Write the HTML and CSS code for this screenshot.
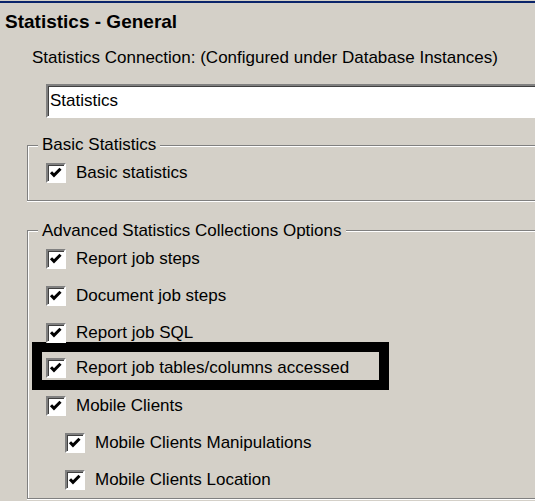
FILE: index.html
```html
<!DOCTYPE html>
<html>
<head>
<meta charset="utf-8">
<link rel="stylesheet" href="styles.css">
</head>
<body>
<div class="topline"></div>
<div class="title">Statistics - General</div>
<div class="conn-label">Statistics Connection: (Configured under Database Instances)</div>
<div class="input">Statistics</div>

<fieldset class="group group-basic">
  <legend>Basic Statistics</legend>
  <div class="row"><span class="cb"><svg viewBox="0 0 16 16" width="16" height="16"><polyline points="3,7.2 6,10.4 12.5,3.8" fill="none" stroke="#000" stroke-width="3"/></svg></span><span class="lbl">Basic statistics</span></div>
</fieldset>

<fieldset class="group group-adv">
  <legend>Advanced Statistics Collections Options</legend>
  <div class="row"><span class="cb"><svg viewBox="0 0 16 16" width="16" height="16"><polyline points="3,7.2 6,10.4 12.5,3.8" fill="none" stroke="#000" stroke-width="3"/></svg></span><span class="lbl">Report job steps</span></div>
  <div class="row"><span class="cb"><svg viewBox="0 0 16 16" width="16" height="16"><polyline points="3,7.2 6,10.4 12.5,3.8" fill="none" stroke="#000" stroke-width="3"/></svg></span><span class="lbl">Document job steps</span></div>
  <div class="row"><span class="cb"><svg viewBox="0 0 16 16" width="16" height="16"><polyline points="3,7.2 6,10.4 12.5,3.8" fill="none" stroke="#000" stroke-width="3"/></svg></span><span class="lbl">Report job SQL</span></div>
  <div class="row highlight"><span class="cb"><svg viewBox="0 0 16 16" width="16" height="16"><polyline points="3,7.2 6,10.4 12.5,3.8" fill="none" stroke="#000" stroke-width="3"/></svg></span><span class="lbl">Report job tables/columns accessed</span></div>
  <div class="row"><span class="cb"><svg viewBox="0 0 16 16" width="16" height="16"><polyline points="3,7.2 6,10.4 12.5,3.8" fill="none" stroke="#000" stroke-width="3"/></svg></span><span class="lbl">Mobile Clients</span></div>
  <div class="row sub"><span class="cb"><svg viewBox="0 0 16 16" width="16" height="16"><polyline points="3,7.2 6,10.4 12.5,3.8" fill="none" stroke="#000" stroke-width="3"/></svg></span><span class="lbl">Mobile Clients Manipulations</span></div>
  <div class="row sub"><span class="cb"><svg viewBox="0 0 16 16" width="16" height="16"><polyline points="3,7.2 6,10.4 12.5,3.8" fill="none" stroke="#000" stroke-width="3"/></svg></span><span class="lbl">Mobile Clients Location</span></div>
</fieldset>
</body>
</html>
```

FILE: styles.css
```css
html, body {
  margin: 0;
  padding: 0;
  background: #d4d0c8;
  overflow: hidden;
}
body {
  width: 535px;
  height: 501px;
  font-family: "Liberation Sans", Arial, sans-serif;
  font-size: 17px;
  line-height: 20px;
  color: #000;
}
.topline {
  margin-top: 1px;
  height: 2px;
  background: #0a246a;
}
.title {
  font-weight: bold;
  font-size: 19px;
  line-height: 22px;
  padding-left: 5px;
  margin-top: 8px;
}
.conn-label {
  padding-left: 32px;
  margin-top: 15px;
}
.input {
  margin: 16px 0 0 46px;
  height: 30px;
  box-sizing: content-box;
  background: #fff;
  border-style: solid;
  border-width: 2px 0 2px 2px;
  border-color: #808080 #fff #fff #808080;
  box-shadow: inset 1px 1px 0 #404040;
  padding-left: 2px;
  line-height: 30px;
}
.group {
  margin: 0 0 0 27px;
  padding: 0 0 0 10px;
  border: 1px solid #808080;
  border-right: none;
  box-shadow: inset 1px 1px 0 #fff, 0 1px 0 #fff;
  min-width: 0;
}
.group legend {
  padding: 0 4px;
  line-height: 20px;
  background: #d4d0c8;
}
.group-basic {
  margin-top: 17px;
  padding-bottom: 8px;
}
.group-adv {
  margin-top: 20px;
  padding-bottom: 0;
}
.row {
  display: flex;
  align-items: center;
  height: 36.8px;
  padding-left: 8px;
}
.row.sub {
  padding-left: 27px;
}
.cb {
  flex: none;
  width: 16px;
  height: 16px;
  background: #fff;
  border-style: solid;
  border-width: 2px;
  border-color: #808080 #fff #fff #808080;
  box-shadow: inset 1px 1px 0 #404040;
  display: block;
}
.cb svg {
  display: block;
  width: 16px;
  height: 16px;
}
.lbl {
  margin-left: 10px;
  white-space: nowrap;
}
.row.highlight {
  margin-left: -6px;
  width: 333px;
  height: 25px;
  padding-top: 3px;
  padding-left: 4px;
  border: 10px solid #000;
  margin-top: -9px;
  margin-bottom: -2.2px;
}
```
